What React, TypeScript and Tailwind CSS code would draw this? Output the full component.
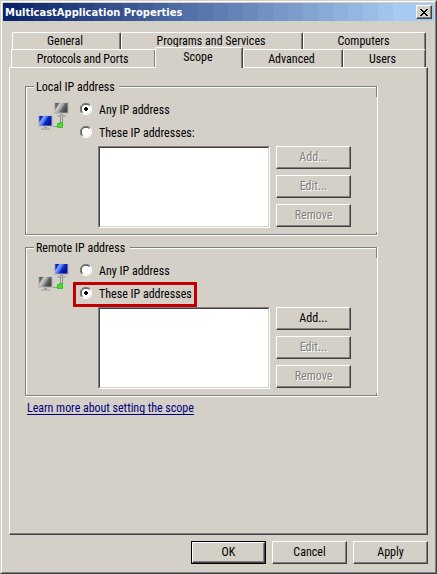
import type { ReactNode } from "react";

const RAISED =
  "border border-t-white border-l-white border-r-[#404040] border-b-[#404040] shadow-[inset_-1px_-1px_0_#808080]";

const TITLE_BANDS = Array.from({ length: 27 }, (_, i) => {
  const t = Math.min(i / 26, 1);
  const mix = (a: number, b: number) => Math.round(a + (b - a) * t);
  return `rgb(${mix(10, 166)} ${mix(36, 202)} ${mix(106, 240)})`;
});

function PushButton({ label, disabled, primary }: { label: string; disabled?: boolean; primary?: boolean }) {
  return (
    <button className={`block h-[23px] w-[75px] shrink-0 bg-[#d4d0c8] ${primary ? "border border-black" : ""}`}>
      <span
        className={`flex h-full w-full items-center justify-center pb-px ${RAISED} ${
          disabled ? "text-[#808080] [text-shadow:1px_1px_0_#fff]" : "text-black"
        }`}
      >
        {label}
      </span>
    </button>
  );
}

function Radio({ checked }: { checked?: boolean }) {
  return (
    <svg width="12" height="12" viewBox="0 0 12 12" className="shrink-0">
      <circle cx="6" cy="6" r="5" fill="#fff" />
      <path d="M1.9 10.1A5.5 5.5 0 0 1 10.1 1.9" fill="none" stroke="#808080" />
      <path d="M2.6 9.4A4.6 4.6 0 0 1 9.4 2.6" fill="none" stroke="#404040" />
      <path d="M10.1 1.9A5.5 5.5 0 0 1 1.9 10.1" fill="none" stroke="#fff" />
      {checked && <path d="M5 4h2v1h1v2H7v1H5V7H4V5h1z" fill="#000" />}
    </svg>
  );
}

function Option({ label, checked, children }: { label: string; checked?: boolean; children?: ReactNode }) {
  return (
    <label className="relative flex h-[14px] items-center gap-[7px]">
      <Radio checked={checked} />
      <span className="pt-px">{label}</span>
      {children}
    </label>
  );
}

function Monitor({ x, y, lit }: { x: number; y: number; lit: boolean }) {
  return (
    <g transform={`translate(${x} ${y})`}>
      <rect x="0" y="0" width="15" height="12" fill="#bcbcba" />
      <rect x="0" y="0" width="15" height="1" fill="#c9c9c7" />
      <rect x="1.3" y="1" width="12.2" height="9.6" fill={lit ? "url(#blue)" : "url(#gray)"} />
      <rect x="6" y="12" width="3" height="1.4" fill="#9b9b99" />
      <rect x="3" y="13.4" width="9" height="1.3" fill="#a4a4a2" />
    </g>
  );
}

function NetworkIcon({ localLit }: { localLit: boolean }) {
  return (
    <svg width="33" height="29" viewBox="0 0 33 29" className="shrink-0">
      <defs>
        <linearGradient id="blue" x1="0" y1="0" x2="1" y2="0.5">
          <stop offset="0" stopColor="#0a1b9e" />
          <stop offset="0.22" stopColor="#0b2de0" />
          <stop offset="0.32" stopColor="#8ea9fa" />
          <stop offset="0.55" stopColor="#3f66ee" />
          <stop offset="0.66" stopColor="#0c28c8" />
          <stop offset="1" stopColor="#06128e" />
        </linearGradient>
        <linearGradient id="gray" x1="0" y1="0" x2="1" y2="0.5">
          <stop offset="0" stopColor="#474747" />
          <stop offset="0.22" stopColor="#6c6c6c" />
          <stop offset="0.34" stopColor="#cecece" />
          <stop offset="0.58" stopColor="#a0a0a0" />
          <stop offset="0.7" stopColor="#6a6a6a" />
          <stop offset="1" stopColor="#424242" />
        </linearGradient>
      </defs>
      <Monitor x={17} y={0} lit={!localLit} />
      <path d="M23.5 14v7M25.5 14v7" fill="none" stroke="#8d8d8b" />
      <path d="M24.5 14v7" fill="none" stroke="#d5d5d5" />
      <path d="M15 24.5h6" fill="none" stroke="#9a9a98" />
      <Monitor x={1} y={13} lit={localLit} />
      <path d="M21.5 21.5h1v-1h3v5h-5v-4z" fill="#3ae81c" stroke="#35b322" strokeWidth="0.8" />
    </svg>
  );
}

function Group({ title, children, className, legendWidth }: { title: string; children: ReactNode; className: string; legendWidth: string }) {
  return (
    <section
      className={`relative flex w-[353px] flex-col border-b border-l border-[#808080] border-r border-r-white shadow-[inset_1px_0_0_#fff,0_1px_0_#fff] ${className}`}
    >
      <div className="flex h-[2px] items-center">
        <i className="h-[2px] w-2 border-t border-[#808080] bg-white" />
        <span className={`flex h-[14px] shrink-0 items-center pl-[2px] ${legendWidth}`}>{title}</span>
        <i className="h-[2px] flex-1 border-t border-[#808080] bg-white" />
      </div>
      <i className="absolute top-px right-0 h-[10px] w-px bg-[#808080]" />
      <i className="absolute right-0 bottom-0 h-[2px] w-px bg-[#808080]" />
      {children}
    </section>
  );
}

function AddressList({ addEnabled }: { addEnabled?: boolean }) {
  return (
    <div className="ml-[72px] flex gap-[6px]">
      <div className="h-[82px] w-[172px] border border-t-[#808080] border-r-white border-b-white border-l-[#808080] bg-white">
        <div className="h-full w-full border border-t-[#404040] border-r-[#d4d0c8] border-b-[#d4d0c8] border-l-[#404040]" />
      </div>
      <div className="flex flex-col gap-[6px]">
        <PushButton label="Add..." disabled={!addEnabled} />
        <PushButton label="Edit..." disabled />
        <PushButton label="Remove" disabled />
      </div>
    </div>
  );
}

function Tab({ label, width }: { label: string; width: string }) {
  return (
    <div
      className={`flex h-[18px] items-center justify-center rounded-t-[2px] border-t border-r border-l border-t-white border-r-[#404040] border-l-white shadow-[inset_-1px_0_0_#808080] ${width}`}
    >
      {label}
    </div>
  );
}

export default function App() {
  return (
    <main className="flex h-[574px] w-[437px] flex-col overflow-hidden border border-t-[#d4d0c8] border-r-[#404040] border-b-[#404040] border-l-[#d4d0c8] bg-[#d4d0c8] font-['Roboto','Liberation_Sans',sans-serif] text-[12px] leading-[14px] whitespace-nowrap text-black [font-stretch:87.5%]">
      <div className="flex h-full flex-col border border-t-white border-r-[#808080] border-b-[#808080] border-l-white px-px pt-px">
        <header className="relative flex h-[18px] shrink-0 items-center justify-between overflow-hidden pr-[2px] pl-[2px]">
          <div className="absolute inset-0 flex">
            {TITLE_BANDS.map((color) => (
              <i key={color} className="w-[15px] shrink-0 last:flex-1" style={{ background: color }} />
            ))}
          </div>
          <h1 className="relative pt-px font-['DejaVu_Sans_Condensed','DejaVu_Sans',sans-serif] text-[11px] font-bold tracking-[0.03px] text-white">
            MulticastApplication Properties
          </h1>
          <button className={`relative flex h-[14px] w-4 items-center justify-center bg-[#d4d0c8] ${RAISED}`}>
            <svg width="8" height="7" viewBox="0 0 8 7" shapeRendering="crispEdges">
              <path d="M0 0h2v1h1v1h2V1h1V0h2v1H7v1H6v1H5v1h1v1h1v1h1v1H6V6H5V5H3v1H2v1H0V6h1V5h1V4h1V3H2V2H1V1H0z" />
            </svg>
          </button>
        </header>

        <nav className="mt-[11px] flex flex-col pl-[9px]">
          <div className="flex h-[17px]">
            <Tab label="General" width="w-[109px] pr-[3px] pb-[2px]" />
            <Tab label="Programs and Services" width="w-[182px] pr-[2px] pb-[2px]" />
            <Tab label="Computers" width="w-[123px] pr-[2px] pb-[2px]" />
          </div>
          <div className="-ml-px flex h-[18px] items-end">
            <Tab label="Protocols and Ports" width="w-[145px] pr-[2px] tracking-[-0.13px]" />
            <div className="z-10 -mb-px -ml-px flex h-[21px] w-[88px] shrink-0 items-center justify-center rounded-t-[2px] border-t border-r border-l border-t-white border-r-[#404040] border-l-white bg-[#d4d0c8] pr-[2px] pb-[2px] shadow-[inset_-1px_0_0_#808080]">
              Scope
            </div>
            <Tab label="Advanced" width="w-[100px] pr-[3px]" />
            <Tab label="Users" width="w-[83px] pr-[4px]" />
          </div>
        </nav>

        <div className={`ml-[6px] flex h-[468px] w-[419px] shrink-0 flex-col pt-[18px] pl-[15px] ${RAISED}`}>
          <Group title="Local IP address" className="h-[149px]" legendWidth="w-[85px]">
            <div className="flex h-[58px] pt-[14px] pl-[11px]">
              <NetworkIcon localLit />
              <div className="ml-[10px] flex flex-col gap-[9px]">
                <Option label="Any IP address" checked />
                <Option label="These IP addresses:" />
              </div>
            </div>
            <AddressList />
          </Group>

          <Group title="Remote IP address" className="mt-[12px] h-[149px]" legendWidth="w-[96px]">
            <div className="flex h-[58px] pt-[14px] pl-[11px]">
              <NetworkIcon localLit={false} />
              <div className="ml-[10px] flex flex-col gap-[9px]">
                <Option label="Any IP address" />
                <Option label="These IP addresses" checked>
                  <span className="absolute -top-[4px] -left-[7px] h-[25px] w-[124px] border-[3px] border-[#c00000]" />
                </Option>
              </div>
            </div>
            <AddressList addEnabled />
          </Group>

          <a className="mt-[5px] ml-[2px] h-[14px] self-start border-b border-[#00007f] tracking-[-0.03px] text-[#00007f]">
            Learn more about setting the scope
          </a>
        </div>

        <footer className="mt-[6px] flex gap-[6px] pl-[188px]">
          <PushButton label="OK" primary />
          <PushButton label="Cancel" />
          <PushButton label="Apply" />
        </footer>
      </div>
    </main>
  );
}
